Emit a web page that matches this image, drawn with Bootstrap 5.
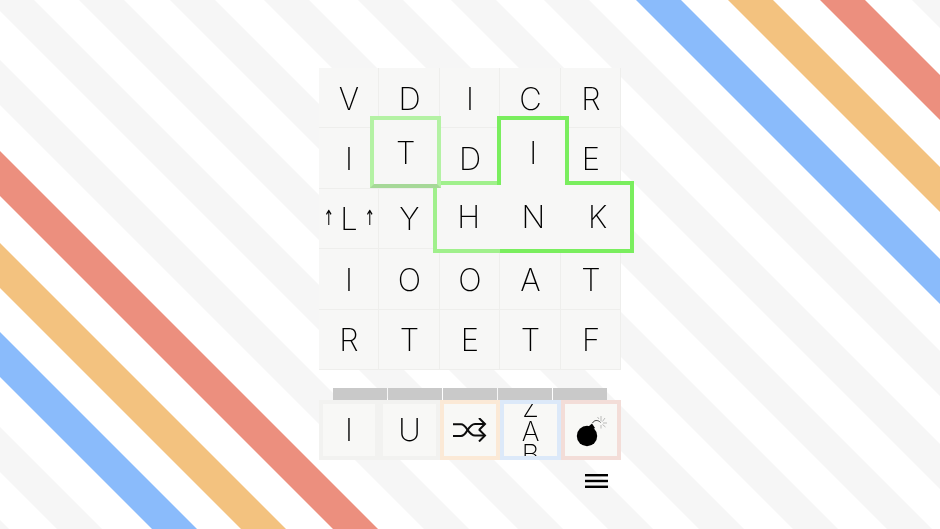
<!DOCTYPE html>
<html lang="en">
<head>
    <meta charset="UTF-8">
    <meta name="viewport" content="width=device-width, initial-scale=1.0">
    <link href="https://cdn.jsdelivr.net/npm/bootstrap@5.3.3/dist/css/bootstrap.min.css" rel="stylesheet">
    <script src="https://cdn.jsdelivr.net/npm/bootstrap@5.3.3/dist/js/bootstrap.bundle.min.js"></script>
    <title>word grid</title>
    <style>
        body{
            background-color: #fff;
            color: #000;
            font-family: Inter, Roboto, "Liberation Sans", sans-serif;
            font-weight: 200;
        }
        .stripes{
            position: absolute;
            top: 0;
            left: 0;
        }
        .game-col{
            width: 302.5px;
            padding-top: 68px;
            will-change: opacity;
        }
        .board-grid{
            display: grid;
            grid-template-columns: repeat(5, 60.5px);
            grid-auto-rows: 60.4px;
        }
        .cell-box{
            background-color: #f7f7f6;
            border-right: 1px solid #eeeeec;
            border-bottom: 1px solid #eeeeec;
            font-size: 31px;
            line-height: 1;
            padding: 1px 0 0 1px;
        }
        .arrow-mark{
            font-family: "DejaVu Sans", sans-serif;
            font-size: 21px;
            font-weight: 400;
            margin: 0 3px;
            transform: scaleX(.6);
        }
        .lifted{
            position: absolute;
            background-color: #f7f7f6;
            border: 4.5px solid #7aee5e;
            z-index: 2;
        }
        .lift-t{ left: -9px; top: -12px; width: 71px; height: 72px; border-color: #b4f2a4; border-bottom-color: #a6d898; z-index: 4; }
        .lift-i{ left: -3px; top: -12px; width: 72px; height: 69px; border-bottom: 0; z-index: 3; }
        .lift-h{ left: -7px; top: -8px; width: 68px; height: 72px; border-right: 0; border-color: #a0f08c; }
        .lift-n{ left: 0; top: -8px; width: 66px; height: 72px; border-left: 0; border-right: 0; }
        .lift-k{ left: 5px; top: -8px; width: 68px; height: 72px; border-left: 0; }
        .progress-strip{
            display: grid;
            grid-template-columns: repeat(5, 1fr);
            gap: 1px;
            width: 274px;
            height: 12px;
            margin-top: 18px;
        }
        .progress-strip span{
            background-color: #c9c9c9;
        }
        .tray-row{
            display: grid;
            grid-template-columns: repeat(5, 60.5px);
            height: 60px;
        }
        .tray-slot{
            background-color: #f8f8f6;
            border: 4px solid #f2f2f0;
            font-size: 31px;
            line-height: 1;
        }
        .slot-orange{ border-color: #fbe9d6; }
        .slot-blue{ border-color: #dce9f9; }
        .slot-red{ border-color: #f3ddd8; }
        .stack-letters{
            font-size: 27px;
            line-height: 23.5px;
            padding-top: 3px;
        }
        .bomb-icon{
            margin-top: 2px;
        }
        .menu-icon{
            margin-top: 14px;
            margin-right: 13px;
        }
    </style>
</head>
<body class="position-relative overflow-hidden vh-100">
    <svg class="stripes" id="stripes" width="940" height="529" viewBox="0 0 940 529"></svg>

    <div class="d-flex justify-content-center position-relative">
        <div class="game-col d-flex flex-column align-items-center">
            <div class="board-grid">
                <div class="cell-box d-flex align-items-center justify-content-center">V</div>
                <div class="cell-box d-flex align-items-center justify-content-center">D</div>
                <div class="cell-box d-flex align-items-center justify-content-center">I</div>
                <div class="cell-box d-flex align-items-center justify-content-center">C</div>
                <div class="cell-box d-flex align-items-center justify-content-center">R</div>

                <div class="cell-box d-flex align-items-center justify-content-center">I</div>
                <div class="cell-box position-relative">
                    <div class="lifted lift-t d-flex align-items-center justify-content-center">T</div>
                </div>
                <div class="cell-box d-flex align-items-center justify-content-center">D</div>
                <div class="cell-box position-relative">
                    <div class="lifted lift-i d-flex align-items-center justify-content-center">I</div>
                </div>
                <div class="cell-box d-flex align-items-center justify-content-center">E</div>

                <div class="cell-box d-flex align-items-center justify-content-center"><span class="arrow-mark">↑</span>L<span class="arrow-mark">↑</span></div>
                <div class="cell-box d-flex align-items-center justify-content-center">Y</div>
                <div class="cell-box position-relative">
                    <div class="lifted lift-h d-flex align-items-center justify-content-center">H</div>
                </div>
                <div class="cell-box position-relative">
                    <div class="lifted lift-n d-flex align-items-center justify-content-center">N</div>
                </div>
                <div class="cell-box position-relative">
                    <div class="lifted lift-k d-flex align-items-center justify-content-center">K</div>
                </div>

                <div class="cell-box d-flex align-items-center justify-content-center">I</div>
                <div class="cell-box d-flex align-items-center justify-content-center">O</div>
                <div class="cell-box d-flex align-items-center justify-content-center">O</div>
                <div class="cell-box d-flex align-items-center justify-content-center">A</div>
                <div class="cell-box d-flex align-items-center justify-content-center">T</div>

                <div class="cell-box d-flex align-items-center justify-content-center">R</div>
                <div class="cell-box d-flex align-items-center justify-content-center">T</div>
                <div class="cell-box d-flex align-items-center justify-content-center">E</div>
                <div class="cell-box d-flex align-items-center justify-content-center">T</div>
                <div class="cell-box d-flex align-items-center justify-content-center">F</div>
            </div>

            <div class="progress-strip">
                <span></span><span></span><span></span><span></span><span></span>
            </div>

            <div class="tray-row">
                <div class="tray-slot d-flex align-items-center justify-content-center">I</div>
                <div class="tray-slot d-flex align-items-center justify-content-center">U</div>
                <div class="tray-slot slot-orange d-flex align-items-center justify-content-center">
                    <svg width="34" height="24" viewBox="0 0 34 24" fill="none" stroke="#0c0c0c" stroke-width="2">
                        <path d="M0 6.3H8C14 6.3 15 17.5 22 17.5H32"/>
                        <path d="M0 18H8C14 18 15 6 22 6H32"/>
                        <path d="M26 0L32 6L26 12"/>
                        <path d="M26 11.5L32 17.5L26 23.5"/>
                    </svg>
                </div>
                <div class="tray-slot slot-blue d-flex flex-column align-items-center justify-content-center overflow-hidden stack-letters">
                    <span>Z</span><span>A</span><span>B</span>
                </div>
                <div class="tray-slot slot-red d-flex align-items-center justify-content-center">
                    <svg class="bomb-icon" width="32" height="32" viewBox="0 0 32 32">
                        <circle cx="12" cy="21" r="10.2" fill="#000"/>
                        <path d="M13.5 11.5L17 8.5L20 13L16.5 15Z" fill="#000"/>
                        <path d="M17.5 8C19 5 23 4.5 25.5 7.5" fill="none" stroke="#333" stroke-width=".9"/>
                        <path d="M26 6.5V1M27.5 6.5L30 3M28 8H32M27.5 9.5L30.5 12M26 10V13.5M24 4L22.5 2" fill="none" stroke="#aaa" stroke-width=".8"/>
                    </svg>
                </div>
            </div>

            <svg class="menu-icon align-self-end" width="23" height="14" viewBox="0 0 23 14" fill="#000">
                <rect y="0" width="23" height="2.4"/>
                <rect y="5.8" width="23" height="2.4"/>
                <rect y="11.6" width="23" height="2.4"/>
            </svg>
        </div>
    </div>

    <script>
        const greyStripes = [-565, -472, -105, -11, 79, 170, 264, 358, 451, 544, 912];
        const colourStripes = [
            [-196, '#ec8f7e'], [-288, '#f3c27f'], [-377, '#8abbfb'],
            [636, '#8abbfb'], [728, '#f3c27f'], [820, '#ec8f7e']
        ];
        const drawStripe = (start, colour) => {
            const stripe = document.createElementNS('http://www.w3.org/2000/svg', 'polygon');
            stripe.setAttribute('points', `${start},0 ${start + 45},0 ${start + 574},529 ${start + 529},529`);
            stripe.setAttribute('fill', colour);
            document.getElementById('stripes').appendChild(stripe);
        };
        greyStripes.forEach(start => drawStripe(start, '#f6f6f6'));
        colourStripes.forEach(item => drawStripe(item[0], item[1]));
    </script>
</body>
</html>
